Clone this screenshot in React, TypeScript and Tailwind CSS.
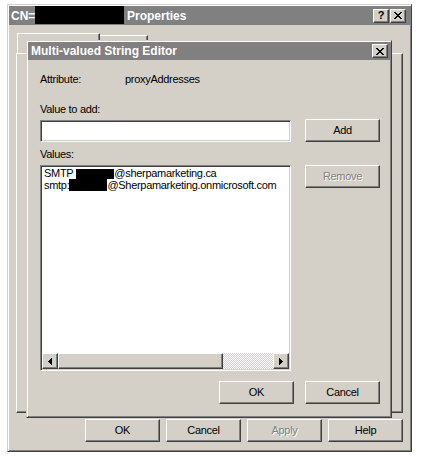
import React from 'react';

// classic 3D borders
const raised =
  'border border-t-white border-l-white border-r-[#404040] border-b-[#404040] shadow-[inset_-1px_-1px_#808080]';
const sunken =
  'border border-t-[#808080] border-l-[#808080] border-r-white border-b-white shadow-[inset_1px_1px_#404040,inset_-1px_-1px_#d4d0c8]';
const frame =
  'border border-t-[#d4d0c8] border-l-[#d4d0c8] border-r-[#404040] border-b-[#404040] shadow-[inset_1px_1px_#fff,inset_-1px_-1px_#808080]';

const CloseGlyph = () => (
  <svg width="8" height="7" viewBox="0 0 8 7" shapeRendering="crispEdges">
    <path
      d="M0 0h2v1H0zM6 0h2v1H6zM1 1h2v1H1zM5 1h2v1H5zM2 2h4v1H2zM3 3h2v1H3zM2 4h4v1H2zM1 5h2v1H1zM5 5h2v1H5zM0 6h2v1H0zM6 6h2v1H6z"
      fill="#000"
    />
  </svg>
);

const ArrowLeft = () => (
  <svg width="4" height="7" viewBox="0 0 4 7" shapeRendering="crispEdges">
    <path d="M3 0h1v7H3zM2 1h1v5H2zM1 2h1v3H1zM0 3h1v1H0z" fill="#000" />
  </svg>
);

const ArrowRight = () => (
  <svg width="4" height="7" viewBox="0 0 4 7" shapeRendering="crispEdges">
    <path d="M0 0h1v7H0zM1 1h1v5H1zM2 2h1v3H2zM3 3h1v1H3z" fill="#000" />
  </svg>
);

const TitleButton = ({ children }: { children: React.ReactNode }) => (
  <div className={`${raised} bg-[#d4d0c8] w-[16px] h-[14px] flex items-center justify-center`}>{children}</div>
);

const Button = ({ label, disabled = false }: { label: string; disabled?: boolean }) => (
  <div
    className={`${raised} bg-[#d4d0c8] w-[75px] h-[23px] flex items-center justify-center ${
      disabled ? 'text-[#808080] [text-shadow:1px_1px_0_#fff]' : 'text-black'
    }`}
  >
    {label}
  </div>
);

export default function App() {
  return (
    <div className="relative w-[421px] h-[459px] bg-white overflow-hidden font-['Liberation_Sans',Arial,sans-serif] text-[11px] tracking-[-0.3px] text-black">
      {/* Properties window */}
      <div className={`absolute left-[7px] top-[4px] w-[405px] h-[448px] ${frame} bg-[#d4d0c8] p-[1px] flex flex-col`}>
        <div className="h-[19px] bg-[#808080] flex items-center pr-[4px] text-white font-bold text-[12px] tracking-normal">
          <span className="pl-[2px] w-[26px]">CN=</span>
          <span className="w-[89px] self-stretch mb-[1px] bg-black" />
          <span className="ml-[3px]">Properties</span>
          <div className="ml-auto flex gap-[1px]">
            <TitleButton>
              <span className="text-black font-bold text-[11px] leading-none">?</span>
            </TitleButton>
            <TitleButton>
              <CloseGlyph />
            </TitleButton>
          </div>
        </div>

        <div className="px-[7px] pt-[8px] flex flex-col">
          {/* tabs (labels are hidden behind the editor dialog) */}
          <div className="h-[20px] flex items-end pl-[1px]">
            <div className="w-[83px] h-[20px] border-t border-l border-r border-t-white border-l-white border-r-[#404040] shadow-[inset_-1px_0_#808080]" />
            <div className="w-[48px] h-[18px] border-t border-r border-t-white border-r-[#404040] shadow-[inset_-1px_0_#808080]" />
          </div>
          <div className={`h-[360px] ${raised}`} />

          <div className="mt-[6px] flex justify-end gap-[6px]">
            <Button label="OK" />
            <Button label="Cancel" />
            <Button label="Apply" disabled />
            <Button label="Help" />
          </div>
        </div>
      </div>

      {/* Multi-valued String Editor dialog */}
      <div className={`absolute left-[26px] top-[40px] w-[366px] h-[378px] ${frame} bg-[#d4d0c8] p-[1px] flex flex-col`}>
        <div className="h-[18px] bg-[#808080] flex items-center justify-between pl-[3px] pr-[2px]">
          <span className="text-white font-bold text-[12px] tracking-normal">Multi-valued String Editor</span>
          <TitleButton>
            <CloseGlyph />
          </TitleButton>
        </div>

        <div className="pl-[12px] pr-[10px] flex flex-col">
          <div className="mt-[13px] h-[13px] leading-[13px] flex">
            <span className="w-[85px]">Attribute:</span>
            <span>proxyAddresses</span>
          </div>

          <div className="mt-[17px] h-[13px] leading-[13px]">Value to add:</div>
          <div className="mt-[3px] flex justify-between items-start">
            <div className={`mt-[1px] w-[251px] h-[22px] bg-white ${sunken}`} />
            <Button label="Add" />
          </div>

          <div className="mt-[6px] h-[13px] leading-[13px]">Values:</div>
          <div className="mt-[4px] flex justify-between items-start">
            <div className={`w-[251px] h-[206px] bg-white ${sunken} p-[1px] flex flex-col`}>
              <div className="flex-1 pl-[2px] leading-[12px] whitespace-nowrap">
                <div>
                  SMTP
                  <span className="inline-block align-top mt-[2px] ml-[3px] w-[38px] h-[10px] bg-black" />
                  @sherpamarketing.ca
                </div>
                <div>
                  smtp:
                  <span className="inline-block align-top w-[38px] h-[12px] bg-black" />
                  @Sherpamarketing.onmicrosoft.com
                </div>
              </div>
              {/* horizontal scrollbar */}
              <div className="h-[16px] flex">
                <div className={`w-[16px] ${raised} bg-[#d4d0c8] flex items-center justify-center`}>
                  <ArrowLeft />
                </div>
                <div className={`w-[165px] ${raised} bg-[#d4d0c8]`} />
                <div className="flex-1 bg-[repeating-conic-gradient(#d4d0c8_0%_25%,#ffffff_0%_50%)] bg-[length:2px_2px]" />
                <div className={`w-[16px] ${raised} bg-[#d4d0c8] flex items-center justify-center`}>
                  <ArrowRight />
                </div>
              </div>
            </div>
            <Button label="Remove" disabled />
          </div>

          <div className="mt-[10px] flex justify-end gap-[11px]">
            <Button label="OK" />
            <Button label="Cancel" />
          </div>
        </div>
      </div>
    </div>
  );
}
